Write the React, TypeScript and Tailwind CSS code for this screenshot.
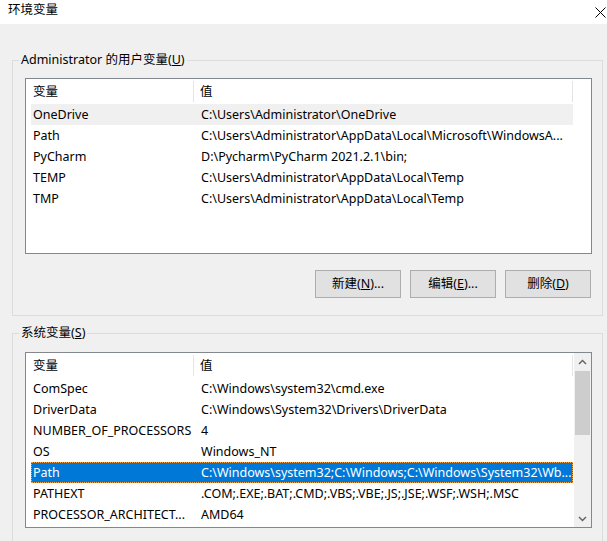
import React from "react";

const userVars = [
  ["OneDrive", "C:\\Users\\Administrator\\OneDrive"],
  ["Path", "C:\\Users\\Administrator\\AppData\\Local\\Microsoft\\WindowsA..."],
  ["PyCharm", "D:\\Pycharm\\PyCharm 2021.2.1\\bin;"],
  ["TEMP", "C:\\Users\\Administrator\\AppData\\Local\\Temp"],
  ["TMP", "C:\\Users\\Administrator\\AppData\\Local\\Temp"],
];

const systemVars = [
  ["ComSpec", "C:\\Windows\\system32\\cmd.exe"],
  ["DriverData", "C:\\Windows\\System32\\Drivers\\DriverData"],
  ["NUMBER_OF_PROCESSORS", "4"],
  ["OS", "Windows_NT"],
  ["Path", "C:\\Windows\\system32;C:\\Windows;C:\\Windows\\System32\\Wb..."],
  ["PATHEXT", ".COM;.EXE;.BAT;.CMD;.VBS;.VBE;.JS;.JSE;.WSF;.WSH;.MSC"],
  ["PROCESSOR_ARCHITECT...", "AMD64"],
];

const Header = () => (
  <div className="flex h-[25px] w-[542px] ml-[5px] items-center shrink-0">
    <div className="w-[163px] h-[21px] pl-[2px] flex items-center border-r border-[#e5e5e5]">变量</div>
    <div className="flex-1 h-[21px] pl-[6px] flex items-center border-r border-[#e5e5e5]">值</div>
  </div>
);

type RowProps = { name: string; value: string; state?: "hover" | "selected" };

const Row = ({ name, value, state }: RowProps) => {
  const bg =
    state === "selected"
      ? "bg-[#0078d7] text-white outline outline-1 outline-dotted outline-[#f2a24a] -outline-offset-1"
      : state === "hover"
      ? "bg-[#f0f0f0]"
      : "";
  return (
    <div className={`flex h-[21px] w-[542px] ml-[5px] items-center shrink-0 ${bg}`}>
      <div className="w-[163px] pl-[2px] whitespace-nowrap overflow-hidden">{name}</div>
      <div className="flex-1 pl-[7px] whitespace-nowrap overflow-hidden">{value}</div>
    </div>
  );
};

const Chevron = ({ up }: { up?: boolean }) => (
  <svg width="9" height="6" viewBox="0 0 9 6" className={up ? "" : "rotate-180"}>
    <polyline points="1,5 4.5,1.5 8,5" fill="none" stroke="#606060" strokeWidth="1.4" />
  </svg>
);

const Button = ({ label, hotkey, tail }: { label: string; hotkey: string; tail: string }) => (
  <button className="w-[86px] h-[28px] bg-[#e1e1e1] border border-[#adadad] flex items-center justify-center">
    {label}(<span className="underline">{hotkey}</span>){tail}
  </button>
);

export default function App() {
  return (
    <div className="w-[607px] h-[541px] overflow-hidden bg-[#f0f0f0] text-[12.5px] leading-[16px] text-black font-['Noto_Sans','Noto_Sans_CJK_SC',sans-serif]">
      <div className="h-[24px] bg-white flex items-center justify-between pl-[8px] pb-[4px]">
        <span>环境变量</span>
        <svg width="11" height="11" viewBox="0 0 11 11" className="mr-[1px] mt-[4px]">
          <path d="M0.5 0.5 L10.5 10.5 M10.5 0.5 L0.5 10.5" stroke="#000" strokeWidth="1" />
        </svg>
      </div>

      <fieldset className="mt-[28px] ml-[12px] w-[591px] border border-[#dcdcdc] pl-[12px] pr-[10px] pb-[17px]">
        <legend className="-ml-[6px] px-[2px]">
          Administrator 的用户变量(<span className="underline">U</span>)
        </legend>
        <div className="mt-[10px] h-[176px] border border-[#828790] bg-white flex flex-col">
          <Header />
          {userVars.map(([n, v], i) => (
            <Row key={n} name={n} value={v} state={i === 0 ? "hover" : undefined} />
          ))}
        </div>
        <div className="mt-[16px] flex justify-end gap-[9px] pr-[1px]">
          <Button label="新建" hotkey="N" tail="..." />
          <Button label="编辑" hotkey="E" tail="..." />
          <Button label="删除" hotkey="D" tail="" />
        </div>
      </fieldset>

      <fieldset className="mt-[9px] ml-[12px] w-[591px] border border-[#dcdcdc] pl-[12px] pr-[10px] pb-[17px]">
        <legend className="-ml-[6px] px-[2px]">
          系统变量(<span className="underline">S</span>)
        </legend>
        <div className="mt-[11px] h-[176px] border border-[#828790] bg-white flex">
          <div className="flex-1 flex flex-col overflow-hidden">
            <Header />
            {systemVars.map(([n, v], i) => (
              <Row key={n + i} name={n} value={v} state={i === 4 ? "selected" : undefined} />
            ))}
          </div>
          <div className="w-[17px] bg-[#f0f0f0] flex flex-col">
            <div className="h-[17px] flex items-center justify-center">
              <Chevron up />
            </div>
            <div className="mt-[1px] mx-[1px] h-[64px] bg-[#cdcdcd]" />
            <div className="flex-1" />
            <div className="h-[17px] flex items-center justify-center">
              <Chevron />
            </div>
          </div>
        </div>
      </fieldset>
    </div>
  );
}
